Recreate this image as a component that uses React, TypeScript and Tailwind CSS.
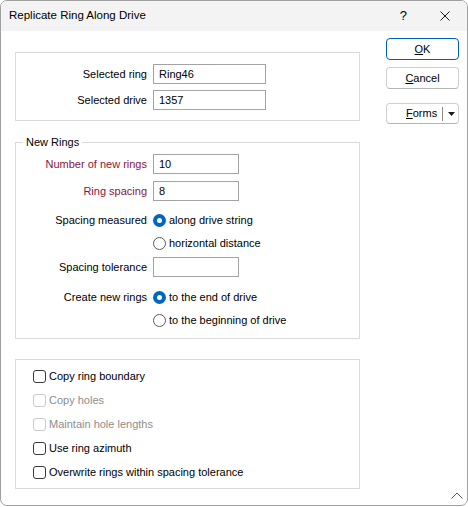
import React from "react";

const font = { fontFamily: '"Liberation Sans", Arial, sans-serif' };

function Input({ value, w }: { value: string; w: string }) {
  return (
    <div
      className={`${w} h-[20px] border border-[#a3a3a3] bg-white pl-[5px] flex items-center text-[11px] text-black`}
    >
      {value}
    </div>
  );
}

function Row({ label, children, red }: { label: string; children: React.ReactNode; red?: boolean }) {
  return (
    <div className="flex items-center">
      <div className={`w-[131px] text-right text-[11px] ${red ? "text-[#8a1538]" : "text-black"}`}>{label}</div>
      <div className="ml-[6px] flex items-center">{children}</div>
    </div>
  );
}

function Radio({ checked, label }: { checked?: boolean; label: string }) {
  return (
    <div className="flex items-center h-[18px]">
      {checked ? (
        <div className="w-[13px] h-[13px] rounded-full bg-[#0067c0] flex items-center justify-center">
          <div className="w-[5px] h-[5px] rounded-full bg-white" />
        </div>
      ) : (
        <div className="w-[13px] h-[13px] rounded-full border border-[#5a5a5a] bg-white" />
      )}
      <span className="ml-[3px] text-[11px] text-black">{label}</span>
    </div>
  );
}

function Check({ label, disabled }: { label: string; disabled?: boolean }) {
  return (
    <div className="flex items-center h-[18px]">
      <div
        className={`w-[13px] h-[13px] rounded-[3px] border ${disabled ? "border-[#c9c9c9]" : "border-[#3a3a3a]"} bg-white`}
      />
      <span className={`ml-[3px] text-[11px] ${disabled ? "text-[#8d8d8d]" : "text-black"}`}>{label}</span>
    </div>
  );
}

export default function App() {
  return (
    <div className="w-[468px] h-[507px] bg-white" style={font}>
      <div className="w-[468px] h-[506px] border border-[#a0a0a0] rounded-[7px] overflow-hidden flex flex-col relative bg-white">
        {/* title bar */}
        <div className="h-[30px] bg-[#f3f3f3] flex items-center shrink-0">
          <span className="ml-[8px] text-[11.5px] text-black">Replicate Ring Along Drive</span>
          <span className="ml-auto text-[13px] text-black mr-[33px]">?</span>
          <svg width="10" height="10" viewBox="0 0 10 10" className="mr-[17px]">
            <path d="M0.5 0.5 L9.5 9.5 M9.5 0.5 L0.5 9.5" stroke="#1a1a1a" strokeWidth="1" />
          </svg>
        </div>

        {/* body */}
        <div className="flex flex-1">
          <div className="ml-[14px] w-[345px] flex flex-col">
            {/* panel 1 */}
            <div className="mt-[21px] border border-[#dadada] h-[69px] flex flex-col pt-[11px] gap-[6px]">
              <Row label="Selected ring">
                <Input value="Ring46" w="w-[113px]" />
              </Row>
              <Row label="Selected drive">
                <Input value="1357" w="w-[113px]" />
              </Row>
            </div>

            {/* panel 2 */}
            <div className="mt-[21px] relative border border-[#dadada] h-[197px] flex flex-col pt-[11px]">
              <span className="absolute left-[7px] top-[-8px] bg-white px-[3px] text-[11px] text-black leading-[14px]">
                New Rings
              </span>
              <Row label="Number of new rings" red>
                <Input value="10" w="w-[86px]" />
              </Row>
              <div className="mt-[7px]">
                <Row label="Ring spacing" red>
                  <Input value="8" w="w-[86px]" />
                </Row>
              </div>
              <div className="mt-[10px]">
                <Row label="Spacing measured">
                  <Radio checked label="along drive string" />
                </Row>
              </div>
              <div className="mt-[5px] ml-[137px]">
                <Radio label="horizontal distance" />
              </div>
              <div className="mt-[5px]">
                <Row label="Spacing tolerance">
                  <Input value="" w="w-[86px]" />
                </Row>
              </div>
              <div className="mt-[11px]">
                <Row label="Create new rings">
                  <Radio checked label="to the end of drive" />
                </Row>
              </div>
              <div className="mt-[5px] ml-[137px]">
                <Radio label="to the beginning of drive" />
              </div>
            </div>

            {/* panel 3 */}
            <div className="mt-[20px] border border-[#dadada] h-[130px] flex flex-col pt-[7px] pl-[17px] gap-[6px]">
              <Check label="Copy ring boundary" />
              <Check label="Copy holes" disabled />
              <Check label="Maintain hole lengths" disabled />
              <Check label="Use ring azimuth" />
              <Check label="Overwrite rings within spacing tolerance" />
            </div>
          </div>

          {/* buttons */}
          <div className="ml-[26px] pt-[7px] flex flex-col">
            <div className="w-[73px] h-[22px] rounded-[4px] border border-[#005fb8] bg-white flex items-center justify-center text-[11px] text-black">
              <span><span className="underline">O</span>K</span>
            </div>
            <div className="mt-[7px] w-[73px] h-[22px] rounded-[4px] border border-[#d0d0d0] border-b-[#b5b5b5] bg-white flex items-center justify-center text-[11px] text-black">
              <span><span className="underline">C</span>ancel</span>
            </div>
            <div className="mt-[14px] w-[73px] h-[21px] rounded-[4px] border border-[#d0d0d0] border-b-[#b5b5b5] bg-white flex items-center text-[11px] text-black">
              <span className="ml-[19px]"><span className="underline">F</span>orms</span>
              <div className="ml-[5px] w-px h-[14px] bg-[#8a8a8a]" />
              <svg width="7" height="4" viewBox="0 0 7 4" className="ml-[5px]">
                <path d="M0 0 L7 0 L3.5 4 Z" fill="#1a1a1a" />
              </svg>
            </div>
          </div>
        </div>

        {/* resize grip */}
        <svg width="12" height="7" viewBox="0 0 12 7" className="absolute right-[4px] bottom-[6px]">
          <path d="M0.5 6.5 L6 1 L11.5 6.5" stroke="#555" strokeWidth="1" fill="none" />
        </svg>
      </div>
    </div>
  );
}
